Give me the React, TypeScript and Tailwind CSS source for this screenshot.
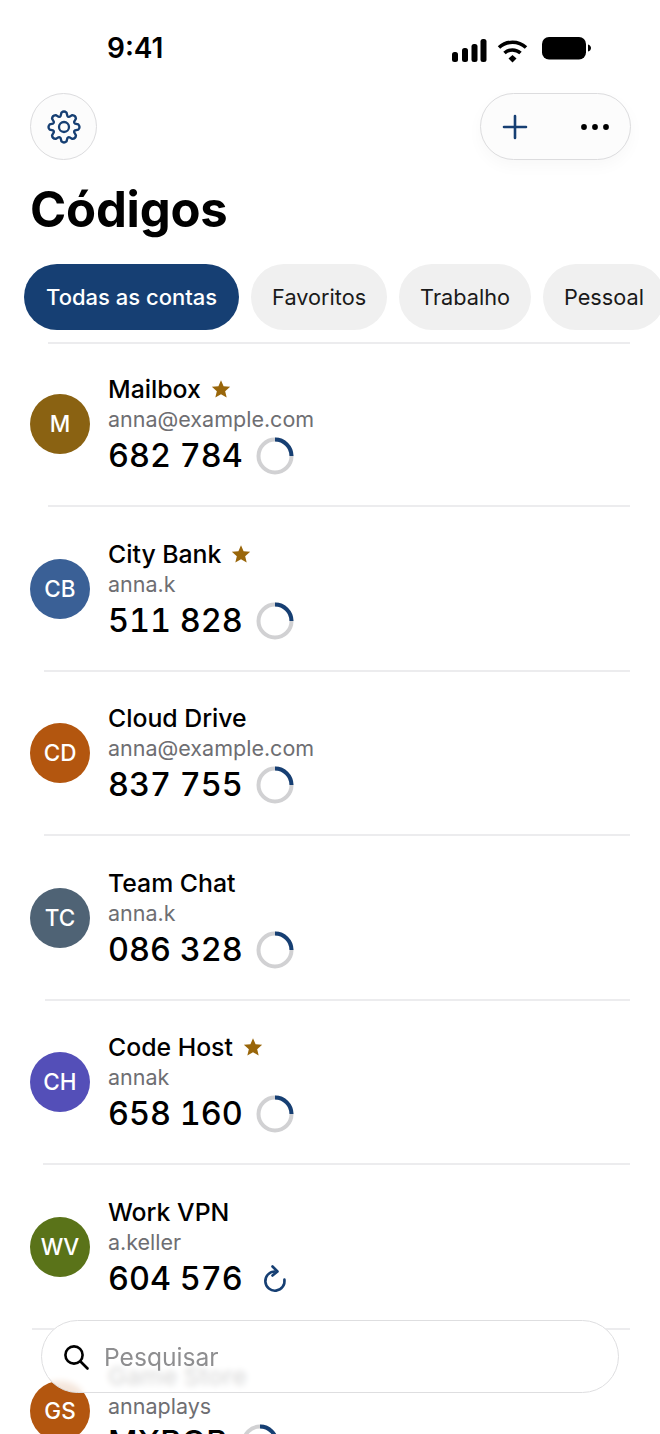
import React from "react";

const NAVY = "#163f73";

function gearPath() {
  const c = 18;
  const pt = (r: number, deg: number) => {
    const t = ((deg - 90) * Math.PI) / 180;
    return `${(c + r * Math.cos(t)).toFixed(2)} ${(c + r * Math.sin(t)).toFixed(2)}`;
  };
  let d = `M${pt(11.6, -17)}`;
  for (let i = 0; i < 8; i++) {
    const a = i * 45;
    d += ` L${pt(14.6, a - 10)} Q${pt(16.6, a)} ${pt(14.6, a + 10)} L${pt(11.6, a + 17)} Q${pt(10.6, a + 22.5)} ${pt(11.6, a + 28)}`;
  }
  return d + "Z";
}

function Ring() {
  return (
    <svg width="38" height="38" viewBox="0 0 38 38" fill="none" className="ml-[13px] mt-[1px] -mb-[1px] shrink-0">
      <circle cx="19" cy="19" r="16.5" stroke="#d1d1d3" strokeWidth="4" />
      <path d="M19 2.5 A16.5 16.5 0 0 1 35.5 19" stroke={NAVY} strokeWidth="4" />
    </svg>
  );
}

function Refresh() {
  return (
    <svg width="38" height="38" viewBox="0 0 38 38" fill="none" stroke={NAVY} strokeWidth="2.6" strokeLinecap="round" strokeLinejoin="round" className="ml-[13px] mt-[1px] -mb-[1px] shrink-0">
      <path d="M18.5 11.5 A9.6 9.6 0 1 0 28.4 19.5" />
      <path d="M16.5 6.5 L21.5 11.5 L16.5 15.5" />
    </svg>
  );
}

function Star() {
  return (
    <svg width="20" height="20" viewBox="0 0 24 24" fill="#99660a" className="ml-[10px] shrink-0">
      <path d="M12 1.5l3.1 7.2 7.9.7-6 5.2 1.8 7.7L12 18.2l-6.8 4.1L7 14.6 1 9.4l7.9-.7z" />
    </svg>
  );
}

type Row = { initials: string; color: string; name: string; user: string; code: string; star?: boolean; refresh?: boolean; ml: string; first?: boolean };

const rows: Row[] = [
  { initials: "M", color: "#8a6212", name: "Mailbox", user: "anna@example.com", code: "682 784", star: true, ml: "ml-[48px]", first: true },
  { initials: "CB", color: "#3a6096", name: "City Bank", user: "anna.k", code: "511 828", star: true, ml: "ml-[44px]" },
  { initials: "CD", color: "#b3560f", name: "Cloud Drive", user: "anna@example.com", code: "837 755", ml: "ml-[44px]" },
  { initials: "TC", color: "#4f6375", name: "Team Chat", user: "anna.k", code: "086 328", ml: "ml-[45px]" },
  { initials: "CH", color: "#544fb8", name: "Code Host", user: "annak", code: "658 160", star: true, ml: "ml-[43px]" },
  { initials: "WV", color: "#5a7319", name: "Work VPN", user: "a.keller", code: "604 576", refresh: true, ml: "ml-[32px]" },
  { initials: "GS", color: "#b3560f", name: "Game Store", user: "annaplays", code: "MXBOB", ml: "ml-[44px]" },
];

const chips = ["Favoritos", "Trabalho", "Pessoal"];

export default function App() {
  return (
    <div className="relative h-[1434px] w-[660px] overflow-hidden bg-white text-black [font-family:Inter,sans-serif]">
      <div className="flex h-[93px] items-start justify-between pl-[107px] pr-[69px] pt-[31px]">
        <span className="text-[28px] font-semibold leading-[34px]">9:41</span>
        <svg width="139" height="26" viewBox="0 0 139 26" className="mt-[6px]" fill="black">
          <rect x="0" y="15" width="6" height="10" rx="2.5" />
          <rect x="10" y="11" width="6" height="14" rx="2.5" />
          <rect x="19.5" y="7" width="6" height="18" rx="2.5" />
          <rect x="28.5" y="2" width="6" height="23" rx="2.5" />
          <path d="M47 10.5a20 20 0 0 1 27 0" fill="none" stroke="black" strokeWidth="3.6" />
          <path d="M52.5 16a12 12 0 0 1 16 0" fill="none" stroke="black" strokeWidth="3.6" />
          <path d="M56.5 21.5l4-3.5 4 3.5-4 4z" />
          <rect x="90" y="0" width="44" height="22.5" rx="7" />
          <path d="M136 7.5c2 .5 3 2 3 3.5s-1 3-3 3.5z" />
        </svg>
      </div>

      <div className="flex items-center justify-between pl-[30px] pr-[29px]">
        <button className="flex h-[67px] w-[67px] items-center justify-center rounded-full border border-[#dcdcde] bg-[#fcfcfc]">
          <svg width="36" height="36" viewBox="0 0 36 36" fill="none" stroke={NAVY} strokeWidth="2.3" strokeLinecap="round" strokeLinejoin="round">
            <path d={gearPath()} />
            <circle cx="18" cy="18" r="5" />
          </svg>
        </button>
        <div className="flex h-[67px] w-[151px] items-center justify-between rounded-full border border-[#dcdcde] bg-[#fcfcfc] pl-[20px] pr-[20px] shadow-[0_6px_16px_rgba(0,0,0,0.03)]">
          <svg width="28" height="28" viewBox="0 0 28 28" fill="none" stroke={NAVY} strokeWidth="2.6" strokeLinecap="round">
            <path d="M14 3v22M3 14h22" />
          </svg>
          <svg width="30" height="8" viewBox="0 0 30 8" fill="black">
            <circle cx="4" cy="4" r="2.9" />
            <circle cx="15" cy="4" r="2.9" />
            <circle cx="26" cy="4" r="2.9" />
          </svg>
        </div>
      </div>

      <h1 className="mt-[19px] pl-[30px] text-[49px] font-bold leading-[62px] tracking-[-0.2px]">Códigos</h1>

      <div className="mt-[23px] flex gap-[12px] pl-[24px]">
        <div className="flex h-[66px] shrink-0 items-center rounded-[33px] px-[22px] text-[22px] font-medium text-white" style={{ backgroundColor: NAVY }}>Todas as contas</div>
        {chips.map((c) => (
          <div key={c} className="flex h-[66px] shrink-0 items-center rounded-[33px] bg-[#f0f0f0] px-[21px] text-[21.7px] text-[#1a1a1a]">{c}</div>
        ))}
      </div>

      <div className="mt-[12px]">
        <div className="ml-[48px] mr-[30px] h-[2px] bg-[#ececee]" />
        {rows.map((r) => (
          <div key={r.name}>
            <div className={`flex items-center pl-[30px] ${r.first ? "h-[161px] pb-[2px]" : "h-[162.5px] pt-[1px]"}`}>
              <div className="flex h-[60px] w-[60px] shrink-0 items-center justify-center rounded-full text-[22.5px] font-medium text-white" style={{ backgroundColor: r.color }}>{r.initials}</div>
              <div className="ml-[18px]">
                <div className="flex items-center text-[24.8px] font-medium leading-[32px]">
                  {r.name}
                  {r.star && <Star />}
                </div>
                <div className="-mt-[1px] mb-[1px] text-[21.5px] leading-[30px] text-[#6e6e72]">{r.user}</div>
                <div className="flex items-center text-[32.4px] font-medium leading-[40px] tabular-nums">
                  <span className="mt-[1px] -mb-[1px] whitespace-nowrap">{r.code}</span>
                  {r.refresh ? <Refresh /> : <Ring />}
                </div>
              </div>
            </div>
            <div className={`${r.ml} mr-[30px] h-[2px] bg-[#ececee]`} />
          </div>
        ))}
      </div>

      <div className="absolute left-[41px] top-[1320px] flex h-[73px] w-[578px] items-center rounded-full border border-[#dedee0] bg-white/85 pl-[20px] backdrop-blur-[3px]">
        <svg width="28" height="28" viewBox="0 0 28 28" fill="none" stroke="black" strokeWidth="2.6" strokeLinecap="round">
          <circle cx="12" cy="12" r="8.6" />
          <path d="M18.5 18.5l7 7" />
        </svg>
        <span className="ml-[14px] mt-[2px] text-[24.6px] text-[#8e8e90]">Pesquisar</span>
      </div>
    </div>
  );
}
